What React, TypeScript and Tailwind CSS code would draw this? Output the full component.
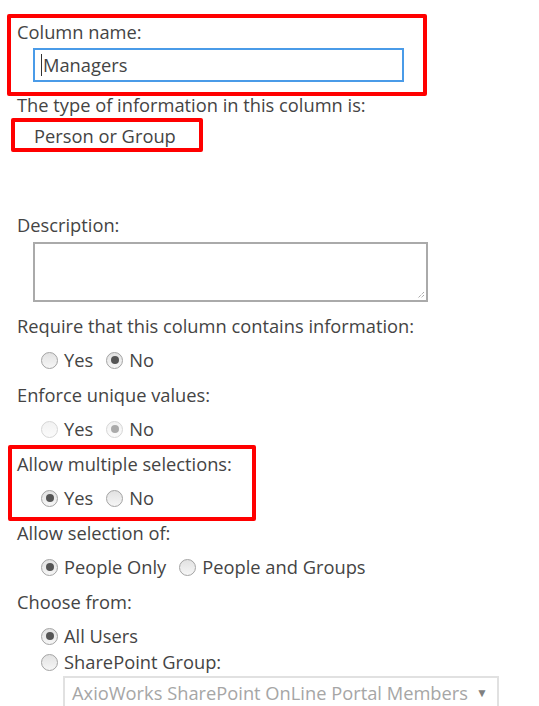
import React from "react";

function Radio({ checked, disabled }: { checked?: boolean; disabled?: boolean }) {
  return (
    <span
      className={
        "inline-flex h-[17px] w-[17px] shrink-0 items-center justify-center rounded-full border " +
        (disabled
          ? "border-[#d6d6d6] bg-gradient-to-b from-[#f2f2f2] to-[#fbfbfb]"
          : "border-[#a3a3a3] bg-gradient-to-b from-[#e2e2e2] to-[#f6f6f6]")
      }
    >
      {checked && (
        <span
          className={"h-[8px] w-[8px] rounded-full " + (disabled ? "bg-[#aaa]" : "bg-[#555]")}
        />
      )}
    </span>
  );
}

function Option({ label, checked, disabled }: { label: string; checked?: boolean; disabled?: boolean }) {
  return (
    <span className="flex items-center gap-[6px]">
      <Radio checked={checked} disabled={disabled} />
      <span>{label}</span>
    </span>
  );
}

export default function App() {
  return (
    <div
      className="relative h-[706px] w-[539px] overflow-hidden bg-white text-[18.3px] text-[#444]"
      style={{ fontFamily: '"Segoe UI", "Open Sans", sans-serif' }}
    >
      <div className="flex flex-col pl-[17px] pt-[15px]">
        <div className="flex h-[33px] items-center">Column name:</div>
        <div className="ml-[16px] flex h-[34px] w-[371px] items-center border-2 border-[#4a9be8] pl-[6px]">
          <span className="mr-[1px] h-[22px] w-px bg-[#333]" />
          Managers
        </div>
        <div className="mt-[7px] flex h-[32px] items-center">
          The type of information in this column is:
        </div>
        <div className="flex h-[30px] items-center pl-[17px]">Person or Group</div>

        <div className="mt-[57px] flex h-[34px] items-center">Description:</div>
        <div className="relative ml-[16px] h-[60px] w-[395px] border-2 border-[#aaa]">
          <svg className="absolute bottom-[1px] right-[1px]" width="9" height="9" viewBox="0 0 9 9">
            <path d="M8 2 L2 8 M8 5 L5 8" stroke="#888" strokeWidth="1" strokeDasharray="1 1" />
          </svg>
        </div>

        <div className="mt-[7px] flex h-[34px] items-center">
          Require that this column contains information:
        </div>
        <div className="flex h-[34px] items-center gap-[13px] pl-[24px]">
          <Option label="Yes" />
          <Option label="No" checked />
        </div>

        <div className="flex h-[35px] items-center">Enforce unique values:</div>
        <div className="flex h-[34px] items-center gap-[13px] pl-[24px]">
          <Option label="Yes" disabled />
          <Option label="No" checked disabled />
        </div>

        <div className="flex h-[35px] items-center">Allow multiple selections:</div>
        <div className="flex h-[34px] items-center gap-[13px] pl-[24px]">
          <Option label="Yes" checked />
          <Option label="No" />
        </div>

        <div className="flex h-[35px] items-center">Allow selection of:</div>
        <div className="flex h-[34px] items-center gap-[13px] pl-[24px]">
          <Option label="People Only" checked />
          <Option label="People and Groups" />
        </div>

        <div className="flex h-[35px] items-center">Choose from:</div>
        <div className="flex h-[34px] items-center pl-[24px]">
          <Option label="All Users" checked />
        </div>
        <div className="-mt-[5px] flex h-[28px] items-center pl-[24px]">
          <Option label="SharePoint Group:" />
        </div>
        <div className="ml-[46px] flex h-[34px] w-[436px] items-center justify-between border-2 border-[#e1e1e1] pl-[7px] pr-[9px] text-[#a6a6a6]">
          <span>AxioWorks SharePoint OnLine Portal Members</span>
          <span className="text-[12px] text-[#808080]">▼</span>
        </div>
      </div>

      {/* annotation boxes */}
      <div className="absolute left-[7px] top-[14px] h-[82px] w-[420px] rounded-[2px] border-4 border-[#f00]" />
      <div className="absolute left-[11px] top-[118px] h-[34px] w-[192px] rounded-[2px] border-4 border-[#f00]" />
      <div className="absolute left-[8px] top-[445px] h-[76px] w-[248px] rounded-[2px] border-4 border-[#f00]" />
    </div>
  );
}
